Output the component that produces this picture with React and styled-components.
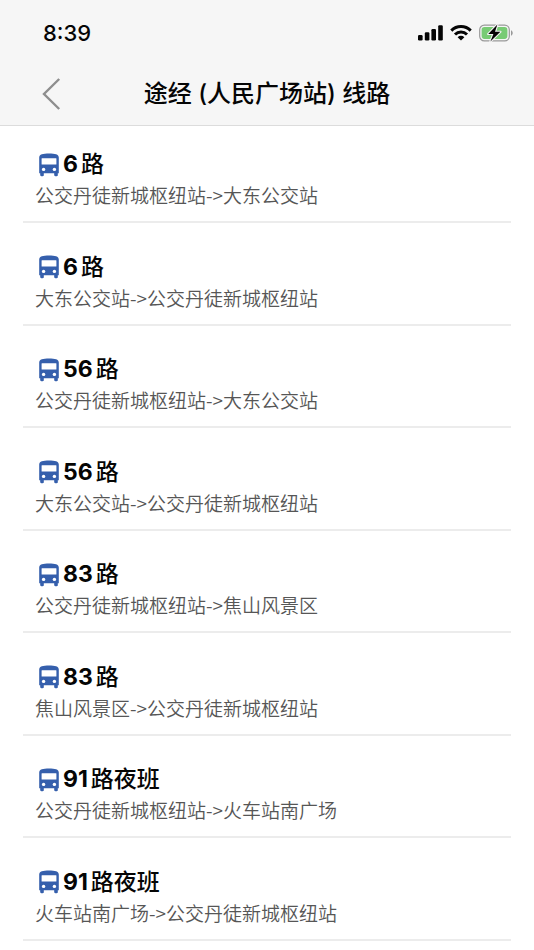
import React from 'react';
import styled, { createGlobalStyle } from 'styled-components';

const colors = {
  header: '#f6f6f6',
  headerLine: '#dcdcdc',
  line: '#ececec',
  text: '#050505',
  muted: '#565656',
  bus: '#355fac',
  arrow: '#8e8e8e',
  battery: '#78cb74',
};

const GlobalStyle = createGlobalStyle`
  * {
    box-sizing: border-box;
  }
  body {
    margin: 0;
    background: white;
    color: ${colors.text};
    font-family: Inter, 'Noto Sans CJK SC', sans-serif;
  }
`;

const StyledPage = styled.div`
  display: flex;
  flex-direction: column;
  min-height: 100vh;
  padding-bottom: 9px;
`;
const StyledHeader = styled.header`
  background: ${colors.header};
  border-bottom: 1px solid ${colors.headerLine};
`;
const StyledStatusBar = styled.div`
  display: flex;
  align-items: center;
  justify-content: space-between;
  height: 64px;
  padding: 2px 20px 0 43px;
`;
const StyledTime = styled.time`
  font-size: 22px;
  font-weight: 500;
  line-height: 28px;
`;
const StyledIndicators = styled.div`
  display: flex;
  align-items: center;
  gap: 7px;
`;
const StyledNavBar = styled.div`
  display: grid;
  grid-template-columns: 72px 1fr 72px;
  align-items: center;
  height: 61px;
  padding-bottom: 2px;
`;
const StyledBackButton = styled.button`
  display: flex;
  justify-content: flex-end;
  padding: 0 11px 0 0;
  border: 0;
  background: none;
  color: ${colors.arrow};
  cursor: pointer;
`;
const StyledTitle = styled.h1`
  margin: 0;
  font-size: 24px;
  font-weight: 500;
  line-height: 36px;
  text-align: center;
`;
const StyledList = styled.ul`
  display: flex;
  flex: 1;
  flex-direction: column;
  justify-content: space-between;
  margin: 0;
  padding: 0 23px;
  list-style: none;
`;
const StyledRoute = styled.li`
  padding: 23px 12px 12px;
  border-bottom: 2px solid ${colors.line};
`;
const StyledRouteName = styled.h2`
  display: flex;
  align-items: center;
  gap: 3px;
  margin: 0;
  padding-left: 4px;
  font-size: 23px;
  font-weight: 500;
  line-height: 31px;
`;
const StyledNumber = styled.span`
  margin-left: 1px;
  font-weight: 700;
`;
const StyledDirection = styled.p`
  margin: 0;
  color: ${colors.muted};
  font-family: 'Noto Sans CJK SC', sans-serif;
  font-size: 19px;
  font-weight: 350;
  line-height: 29px;
`;

const routes = [
  { number: '6', suffix: '路', from: '公交丹徒新城枢纽站', to: '大东公交站' },
  { number: '6', suffix: '路', from: '大东公交站', to: '公交丹徒新城枢纽站' },
  { number: '56', suffix: '路', from: '公交丹徒新城枢纽站', to: '大东公交站' },
  { number: '56', suffix: '路', from: '大东公交站', to: '公交丹徒新城枢纽站' },
  { number: '83', suffix: '路', from: '公交丹徒新城枢纽站', to: '焦山风景区' },
  { number: '83', suffix: '路', from: '焦山风景区', to: '公交丹徒新城枢纽站' },
  { number: '91', suffix: '路夜班', from: '公交丹徒新城枢纽站', to: '火车站南广场' },
  { number: '91', suffix: '路夜班', from: '火车站南广场', to: '公交丹徒新城枢纽站' },
];

const SignalIcon = () => (
  <svg width="25" height="16" viewBox="0 0 25 16" fill="currentColor" aria-hidden="true">
    <rect x="0" y="10" width="4.6" height="5.5" rx="1.2" />
    <rect x="6.8" y="7.3" width="4.6" height="8.2" rx="1.2" />
    <rect x="13.4" y="4" width="4.6" height="11.5" rx="1.2" />
    <rect x="20.2" y="0.3" width="4.6" height="15.2" rx="1.2" />
  </svg>
);

const WifiIcon = () => (
  <svg width="22" height="16" viewBox="0 0 22 16" fill="none" aria-hidden="true">
    <path d="M1.3 5.6A13.8 13.8 0 0 1 20.7 5.6" stroke="currentColor" strokeWidth="3" />
    <path d="M5 9.5A8.5 8.5 0 0 1 17 9.5" stroke="currentColor" strokeWidth="3" />
    <path d="M7.6 12.2a4.9 4.9 0 0 1 6.8 0L11 15.6z" fill="currentColor" />
  </svg>
);

const BatteryIcon = () => (
  <svg width="35" height="18" viewBox="0 0 35 18" aria-hidden="true">
    <rect x="0.7" y="1.2" width="29.6" height="15.6" rx="4.6" fill="none" stroke="#999999" strokeWidth="1.2" />
    <path d="M32 6.3c2.3 1 2.3 4.4 0 5.4z" fill="#999999" />
    <rect x="2.6" y="3.1" width="25.8" height="11.8" rx="2.8" fill={colors.battery} />
    <path
      d="M18.4 0.6 9.2 10h5.2l-3 7.4 10-9.6h-5.4z"
      fill="currentColor"
      stroke={colors.header}
      strokeWidth="2.2"
      strokeLinejoin="round"
      paintOrder="stroke"
    />
  </svg>
);

const BackIcon = () => (
  <svg width="19" height="34" viewBox="0 0 19 34" fill="none" aria-hidden="true">
    <path d="M17.2 2 2 17l15.2 15" stroke="currentColor" strokeWidth="2.4" />
  </svg>
);

const BusIcon = () => (
  <svg width="20" height="24" viewBox="0 0 20 24" aria-hidden="true">
    <path
      d="M.2 4.400C.2 1.300 4 .4 10 .4s9.800.9 9.800 4V20.300h-1v1.700c0 .8-.4 1.200-1.200 1.200h-1.200c-.8 0-1.200-.4-1.200-1.200v-1.700H4.800V22c0 .8-.4 1.200-1.200 1.200H2.400c-.8 0-1.200-.4-1.200-1.200v-1.700h-1z"
      fill={colors.bus}
    />
    <rect x="2.600" y="5.200" width="14.800" height="6.400" rx="0.400" fill="white" />
    <circle cx="4.600" cy="16.400" r="1.700" fill="white" />
    <circle cx="15.400" cy="16.400" r="1.700" fill="white" />
  </svg>
);

const Route = ({ number, suffix, from, to }) => (
  <StyledRoute>
    <StyledRouteName>
      <BusIcon />
      <StyledNumber>{number}</StyledNumber>
      <span>{suffix}</span>
    </StyledRouteName>
    <StyledDirection>{`${from}->${to}`}</StyledDirection>
  </StyledRoute>
);

const App = () => (
  <StyledPage>
    <GlobalStyle />
    <StyledHeader>
      <StyledStatusBar>
        <StyledTime>8:39</StyledTime>
        <StyledIndicators>
          <SignalIcon />
          <WifiIcon />
          <BatteryIcon />
        </StyledIndicators>
      </StyledStatusBar>
      <StyledNavBar>
        <StyledBackButton type="button" aria-label="返回">
          <BackIcon />
        </StyledBackButton>
        <StyledTitle>途经 (人民广场站) 线路</StyledTitle>
      </StyledNavBar>
    </StyledHeader>
    <StyledList>
      {routes.map(route => (
        <Route key={`${route.number}-${route.from}`} {...route} />
      ))}
    </StyledList>
  </StyledPage>
);

export default App;
